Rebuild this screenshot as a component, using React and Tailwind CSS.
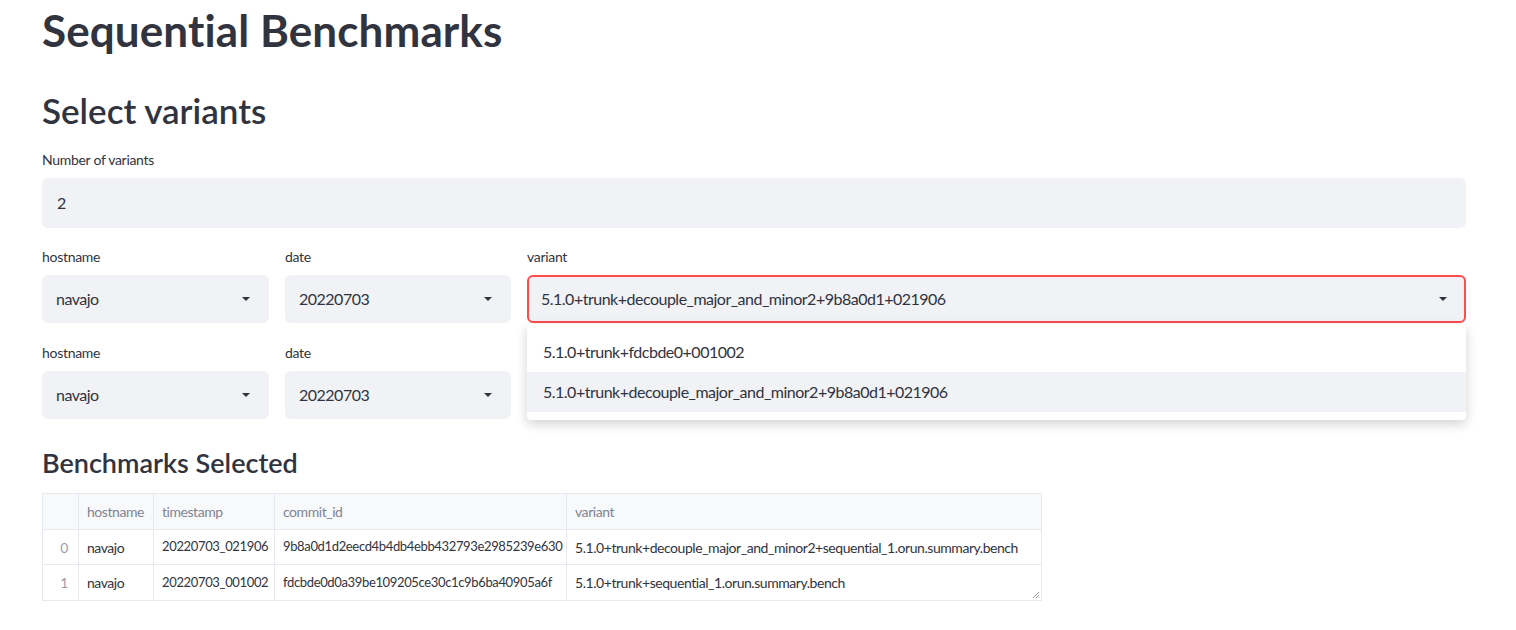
import React from 'react';

const Caret = () => (
  <svg width="10" height="6" viewBox="0 0 10 6" className="shrink-0">
    <path d="M1 1 L5 5 L9 1 Z" fill="#31333F" />
  </svg>
);

const Select = ({ value, active }) => (
  <div
    className={`h-[48px] rounded-[6px] bg-[#f0f2f6] flex items-center justify-between pl-[12px] pr-[16px] text-[16px] tracking-[-0.5px] text-[#31333f] border-2 ${
      active ? 'border-[#ff4b4b]' : 'border-[#f0f2f6]'
    }`}
  >
    <span>{value}</span>
    <Caret />
  </div>
);

const Field = ({ label, children, className }) => (
  <div className={className}>
    <div className="h-[22px] flex items-center text-[14px] tracking-[-0.3px] text-[#31333f]">{label}</div>
    <div className="mt-[8px]">{children}</div>
  </div>
);

const rows = [
  ['0', 'navajo', '20220703_021906', '9b8a0d1d2eecd4b4db4ebb432793e2985239e630', '5.1.0+trunk+decouple_major_and_minor2+sequential_1.orun.summary.bench'],
  ['1', 'navajo', '20220703_001002', 'fdcbde0d0a39be109205ce30c1c9b6ba40905a6f', '5.1.0+trunk+sequential_1.orun.summary.bench'],
];

const cols = ['w-[36px]', 'w-[75px]', 'w-[121px]', 'w-[292px]', 'w-[475px]'];

export default function App() {
  const variantLong = '5.1.0+trunk+decouple_major_and_minor2+9b8a0d1+021906';
  return (
    <div className="min-h-[630px] bg-white text-[#31333f] font-['Lato','Noto_Sans',sans-serif]">
      <div className="w-[1424px] ml-[42px]">
        <div className="h-[60px] flex items-center">
          <h1 className="text-[44px] font-bold tracking-[0.1px] leading-none">Sequential Benchmarks</h1>
        </div>
        <div className="mt-[30px] h-[40px] flex items-center">
          <h2 className="text-[35px] font-semibold leading-none">Select variants</h2>
        </div>

        <div className="mt-[18px]">
          <div className="h-[22px] flex items-center text-[14px] tracking-[-0.3px]">Number of variants</div>
          <div className="mt-[8px] h-[50px] rounded-[6px] bg-[#f0f2f6] flex items-center pl-[15px] text-[16px]">2</div>
        </div>

        <div className="mt-[17px] flex gap-[16px]">
          <Field label="hostname" className="w-[227px]">
            <Select value="navajo" />
          </Field>
          <Field label="date" className="w-[226px]">
            <Select value="20220703" />
          </Field>
          <Field label="variant" className="flex-1 relative">
            <Select value={variantLong} active />
            <div className="absolute left-0 right-0 top-[79px] z-10 bg-white rounded-[4px] py-[8px] shadow-[0_4px_12px_rgba(0,0,0,0.18)] text-[16px] tracking-[-0.5px]">
              <div className="h-[40px] flex items-center px-[16px]">5.1.0+trunk+fdcbde0+001002</div>
              <div className="h-[40px] flex items-center px-[16px] bg-[#f0f2f6]">{variantLong}</div>
            </div>
          </Field>
        </div>

        <div className="mt-[18px] flex gap-[16px]">
          <Field label="hostname" className="w-[227px]">
            <Select value="navajo" />
          </Field>
          <Field label="date" className="w-[226px]">
            <Select value="20220703" />
          </Field>
          <div className="flex-1" />
        </div>

        <div className="mt-[23px] h-[40px] flex items-center">
          <h3 className="text-[27px] font-semibold leading-none">Benchmarks Selected</h3>
        </div>

        <div className="mt-[11px] relative w-[1000px] border border-[#e6e9ef] text-[14px] tracking-[-0.45px]">
          <div className="flex h-[36px] bg-[#f8f9fb] border-b border-[#e6e9ef] text-[#808495]">
            {['', 'hostname', 'timestamp', 'commit_id', 'variant'].map((h, i) => (
              <div key={i} className={`${cols[i]} shrink-0 flex items-center px-[8px] ${i < 4 ? 'border-r border-[#e6e9ef]' : ''}`}>
                {h}
              </div>
            ))}
          </div>
          {rows.map((r, ri) => (
            <div key={ri} className={`flex h-[35px] ${ri === 0 ? 'border-b border-[#e6e9ef]' : ''}`}>
              {r.map((c, i) => (
                <div
                  key={i}
                  className={`${cols[i]} shrink-0 flex items-center whitespace-nowrap overflow-hidden ${
                    i === 0 ? 'justify-end pr-[10px] text-[#9a9cab]' : 'px-[8px]'
                  } ${i === 2 || i === 3 ? 'text-[13px] tracking-[-0.35px]' : ''} ${i < 4 ? 'border-r border-[#e6e9ef]' : ''}`}
                >
                  {c}
                </div>
              ))}
            </div>
          ))}
          <svg className="absolute right-[1px] bottom-[1px]" width="9" height="9" viewBox="0 0 9 9">
            <path d="M8 2 L2 8 M8 5 L5 8 M8 7.5 L7.5 8" stroke="#999" strokeWidth="1" />
          </svg>
        </div>
      </div>
    </div>
  );
}
